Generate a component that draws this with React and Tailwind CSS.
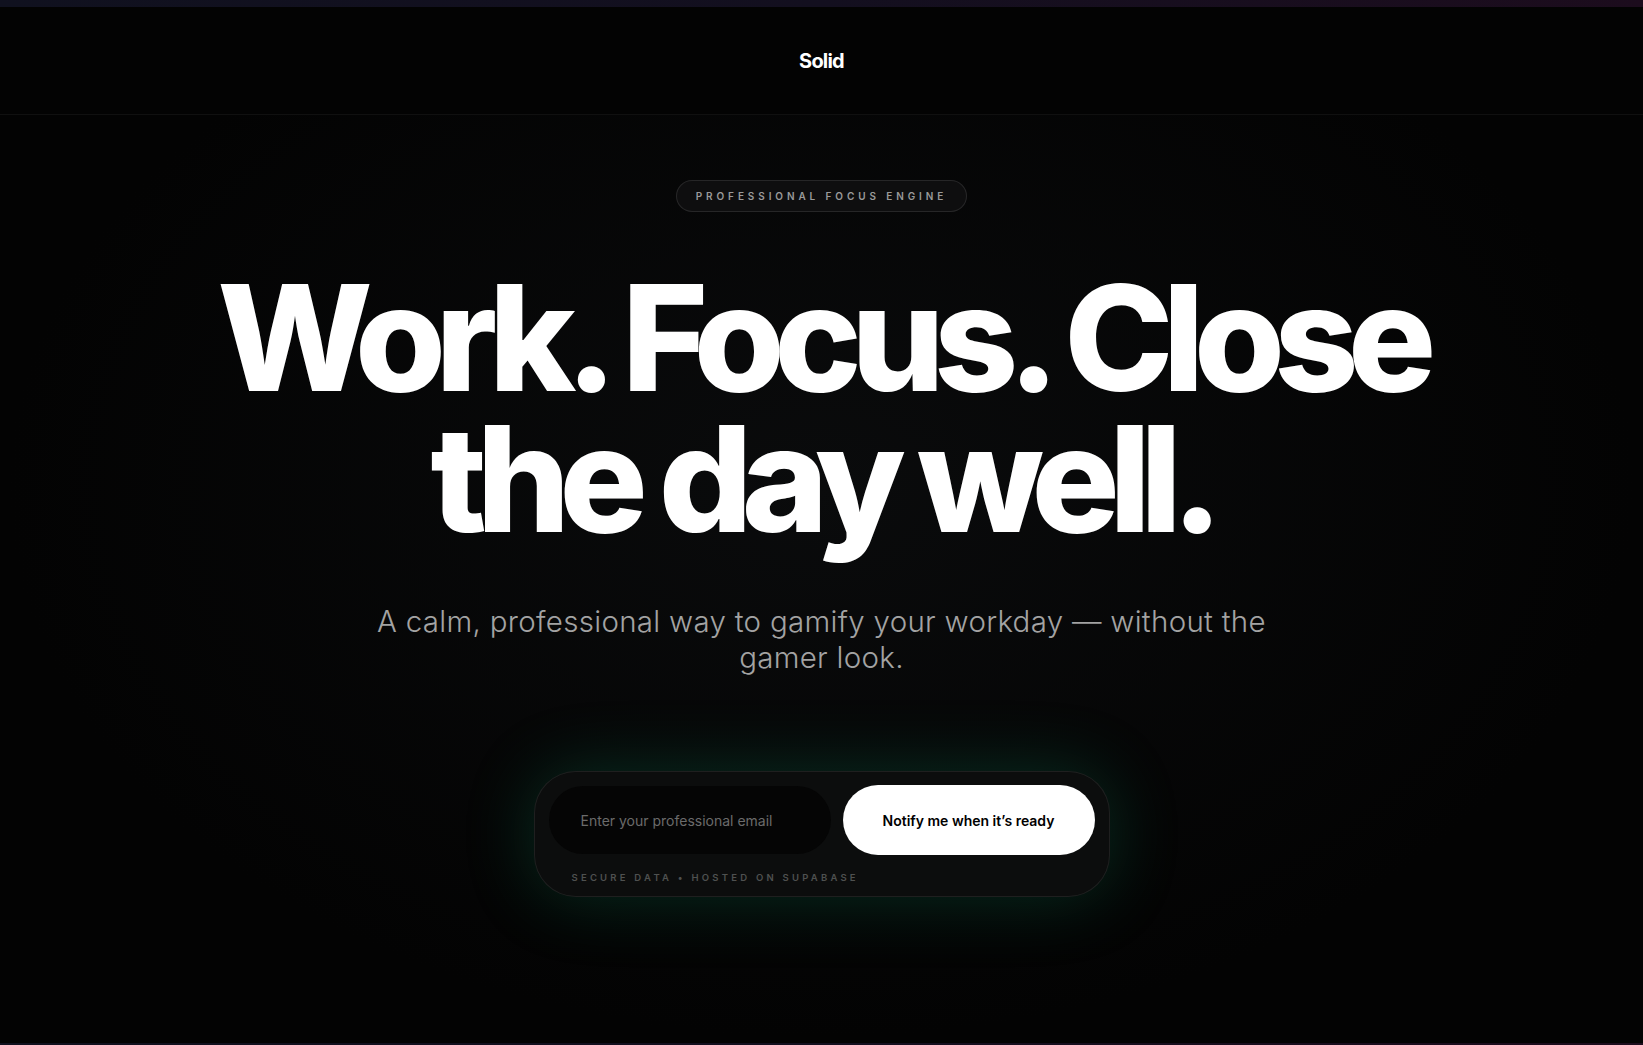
import { useState } from "react";

function App() {
  const [email, setEmail] = useState("");

  return (
    <div className="min-h-screen flex flex-col bg-[#030303] text-white font-['Inter',sans-serif] relative overflow-hidden">
      <div className="h-[7px] w-full bg-gradient-to-r from-[#10111f] via-[#130f1f] to-[#1c0c1d]" />

      <header className="h-[108px] flex items-center justify-center border-b border-white/[0.05]">
        <span className="text-[20px] font-bold tracking-[-0.04em]">Solid</span>
      </header>

      <main className="flex-1 flex flex-col items-center bg-[radial-gradient(ellipse_at_50%_40%,#0a0b0c_0%,#030303_70%)]">
        <div className="mt-[65px] h-[32px] pl-[19px] pr-[19px] flex items-center rounded-full border border-white/10 bg-[#0e0e0f]">
          <span className="text-[10px] font-semibold tracking-[0.39em] text-[#9a9a9a]">PROFESSIONAL FOCUS ENGINE</span>
        </div>

        <h1 className="mt-[55px] text-center text-[147px] leading-[0.96] font-extrabold tracking-[-0.072em] text-white">
          Work. Focus. Close
          <br />
          the day well.
        </h1>

        <p className="mt-[54px] max-w-[920px] text-center text-[29.5px] leading-[36px] font-light tracking-[0.01em] text-[#a3a3a3]">
          A calm, professional way to gamify your workday — without the gamer look.
        </p>

        <div className="mt-[96px] w-[576px] rounded-[42px] border border-white/[0.08] bg-[#0c0d0d] px-[14px] pt-[14px] pb-[11px] shadow-[0_0_70px_rgba(16,185,129,0.22)]">
          <div className="flex gap-3">
            <input
              type="email"
              value={email}
              onChange={(e) => setEmail(e.target.value)}
              placeholder="Enter your professional email"
              className="w-[282px] h-[68px] rounded-full bg-[#050505] px-8 text-[14px] text-white placeholder-[#6b6b6b] outline-none"
            />
            <button className="flex-1 h-[70px] -mt-px rounded-full bg-white text-black text-[14px] font-semibold">
              Notify me when it’s ready
            </button>
          </div>
          <p className="mt-[16px] pl-[23px] text-[9.5px] font-semibold tracking-[0.34em] text-[#4f5150]">
            SECURE DATA • HOSTED ON SUPABASE
          </p>
        </div>
      </main>

      <div className="h-[2px] w-full bg-gradient-to-r from-[#10111f] via-[#130f1f] to-[#1c0c1d]" />
    </div>
  );
}

export default App;
